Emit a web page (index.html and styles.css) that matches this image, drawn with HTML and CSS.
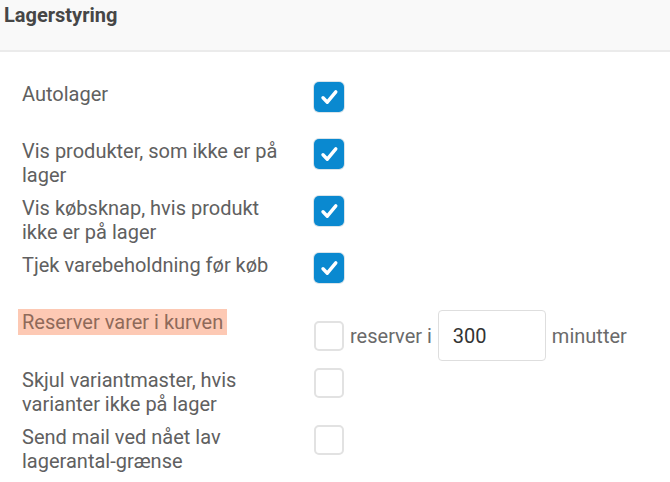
FILE: index.html
```html
<!DOCTYPE html>
<html lang="da">
<head>
<meta charset="utf-8">
<title>Lagerstyring</title>
<link rel="stylesheet" href="styles.css">
</head>
<body>
<div class="header"><h1 class="title">Lagerstyring</h1></div>
<div class="form">
  <div class="row">
    <div class="label">Autolager</div>
    <div class="control"><span class="cb checked"><svg viewBox="0 0 30 30" width="30" height="30"><polyline points="9,15.8 13.3,20.2 21.8,9.8" fill="none" stroke="#fff" stroke-width="3.4" stroke-linecap="round" stroke-linejoin="round"/></svg></span></div>
  </div>
  <div class="row">
    <div class="label">Vis produkter, som ikke er på lager</div>
    <div class="control"><span class="cb checked"><svg viewBox="0 0 30 30" width="30" height="30"><polyline points="9,15.8 13.3,20.2 21.8,9.8" fill="none" stroke="#fff" stroke-width="3.4" stroke-linecap="round" stroke-linejoin="round"/></svg></span></div>
  </div>
  <div class="row">
    <div class="label">Vis købsknap, hvis produkt ikke er på lager</div>
    <div class="control"><span class="cb checked"><svg viewBox="0 0 30 30" width="30" height="30"><polyline points="9,15.8 13.3,20.2 21.8,9.8" fill="none" stroke="#fff" stroke-width="3.4" stroke-linecap="round" stroke-linejoin="round"/></svg></span></div>
  </div>
  <div class="row">
    <div class="label">Tjek varebeholdning før køb</div>
    <div class="control"><span class="cb checked"><svg viewBox="0 0 30 30" width="30" height="30"><polyline points="9,15.8 13.3,20.2 21.8,9.8" fill="none" stroke="#fff" stroke-width="3.4" stroke-linecap="round" stroke-linejoin="round"/></svg></span></div>
  </div>
  <div class="row">
    <div class="label"><span class="highlight">Reserver varer i kurven</span></div>
    <div class="control">
      <span class="cb"></span>
      <span class="inline-text">reserver i</span>
      <input class="num" type="text" value="300">
      <span class="inline-text">minutter</span>
    </div>
  </div>
  <div class="row">
    <div class="label">Skjul variantmaster, hvis varianter ikke på lager</div>
    <div class="control"><span class="cb"></span></div>
  </div>
  <div class="row">
    <div class="label">Send mail ved nået lav lagerantal-grænse</div>
    <div class="control"><span class="cb"></span></div>
  </div>
</div>
</body>
</html>
```

FILE: styles.css
```css
html, body {
  margin: 0;
  padding: 0;
  background: #ffffff;
  font-family: Roboto, "Liberation Sans", sans-serif;
}

.header {
  height: 52px;
  box-sizing: border-box;
  background: #f9f9f9;
  border-bottom: 2px solid #ebebeb;
  padding: 3px 4px 0;
}

.title {
  margin: 0;
  font-size: 20px;
  line-height: 24px;
  font-weight: 700;
  color: #464646;
}

.form {
  padding: 30px 0 0 22px;
}

.row {
  display: flex;
  align-items: flex-start;
  min-height: 50px;
  margin-bottom: 7px;
}

.label {
  width: 270px;
  font-size: 20px;
  line-height: 24px;
  color: #606060;
}

.highlight {
  background: #fdc9b4;
  color: #8f6a5a;
  padding: 1px 4px;
  margin-left: -4px;
}

.control {
  margin-left: 22px;
  display: flex;
  align-items: center;
}

.cb {
  width: 30px;
  height: 30px;
  box-sizing: border-box;
  border-radius: 5px;
  border: 2px solid #e2e2e2;
  background: #ffffff;
  display: block;
  flex: none;
}

.cb.checked {
  border: 0;
  background: #0a89d0;
  box-shadow: 0 0 0 1px #d9e4ea;
}

.cb svg {
  display: block;
}

.inline-text {
  font-size: 20px;
  line-height: 24px;
  color: #6a6a6a;
  margin-left: 6px;
}

.num {
  width: 108px;
  height: 51px;
  box-sizing: border-box;
  border: 1px solid #dedede;
  border-radius: 4px;
  padding: 0 14px;
  margin: 0 0 0 6px;
  font-family: Roboto, "Liberation Sans", sans-serif;
  font-size: 20px;
  color: #333333;
  outline: none;
}
```
